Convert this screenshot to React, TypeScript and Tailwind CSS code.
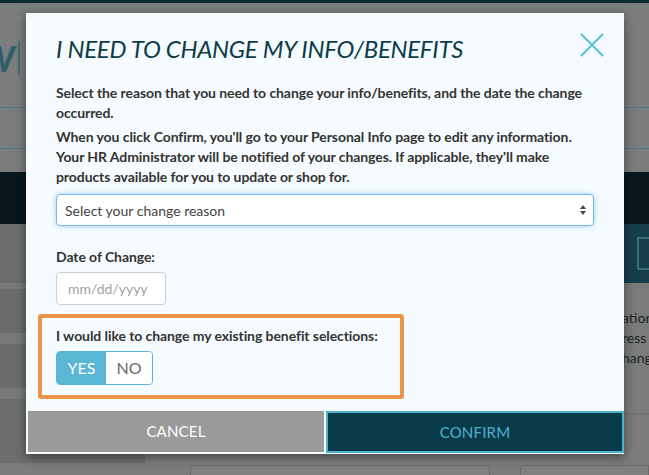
import React from "react";

function Stripe({ h, c }: { h: string; c: string }) {
  return <div className={`${h} ${c}`} />;
}

export default function App() {
  return (
    <div className="relative w-[649px] h-[475px] overflow-hidden bg-[#7a7b7b] font-['Lato','Noto_Sans',sans-serif]">
      {/* page behind (dimmed) */}
      <div className="flex flex-col w-full">
        <div className="h-[3px] bg-[#0d2a33]" />
        <div className="h-[104px] bg-[#7b7c7c] flex items-start pt-[38px]">
          <span className="text-[36px] leading-[34px] italic font-bold text-[#2f5f6c] -ml-[20px]">W</span>
          <div className="ml-[3px] mt-[0px] w-[2px] h-[34px] bg-[#3f6f7b]" />
        </div>
        <div className="h-[1px] bg-[#4a7a86]" />
        <div className="h-[40px] bg-[#7b7c7c]" />
        <div className="h-[1px] bg-[#4a7a86]" />
        <div className="h-[23px] bg-[#7b7c7c]" />
        <div className="h-[52px] bg-[#08171c]" />
        <div className="flex h-[59px]">
          <div className="flex-1 bg-[#6c6d6d]" />
          <div className="w-[100px] bg-[#163e49] flex items-center justify-end">
            <div className="w-[12px] h-[33px] border-2 border-r-0 border-[#3f6d78] rounded-l-[2px]" />
          </div>
        </div>
        <div className="flex h-[180px]">
          <div className="w-[145px] flex flex-col">
            <Stripe h="h-[6px]" c="bg-[#777878]" />
            <Stripe h="h-[44px]" c="bg-[#6a6b6b]" />
            <Stripe h="h-[11px]" c="bg-[#777878]" />
            <Stripe h="h-[44px]" c="bg-[#6a6b6b]" />
            <Stripe h="h-[11px]" c="bg-[#777878]" />
            <Stripe h="h-[64px]" c="bg-[#6c6d6d]" />
          </div>
          <div className="flex-1 flex flex-col items-end pt-[25px]">
            <div className="w-[26px] overflow-hidden text-[14px] leading-[20px] text-[#1f2426] whitespace-nowrap">
              <div className="-ml-[1px]">ation</div>
              <div className="-ml-[1px]">ress a</div>
              <div className="-ml-[1px]">hang</div>
            </div>
            <div className="mt-[45px] w-full h-[1px] bg-[#6e7070]" />
          </div>
        </div>
        <div className="flex h-[40px] pl-[190px] pt-[2px] gap-[30px]">
          <div className="w-[300px] h-[40px] rounded-[4px] border border-[#6a6b6b] bg-[#7e7f7f] pl-[7px] pt-[6px] text-[14px] text-[#1e2224]">Value</div>
          <div className="flex-1 h-[40px] rounded-l-[4px] border border-[#6a6b6b] bg-[#7e7f7f] pl-[12px] pt-[6px] text-[14px] text-[#1e2224]">040715010</div>
        </div>
      </div>

      {/* modal */}
      <div className="absolute left-[26px] top-[13px] w-[598px] bg-[#f5fbfe] shadow-[0_3px_10px_rgba(0,0,0,0.45)] flex flex-col">
        <button className="absolute right-[20px] top-[20px] w-[24px] h-[24px] flex items-center justify-center">
          <svg width="24" height="24" viewBox="0 0 24 24">
            <path d="M1.5 1.5 L22.5 22.5 M22.5 1.5 L1.5 22.5" stroke="#5ebdd7" strokeWidth="2" strokeLinecap="round" fill="none" />
          </svg>
        </button>
        <div className="px-[30px] pt-[21px]">
          <h1 className="text-[24px] leading-[30px] italic font-normal text-[#0c3b4b] tracking-[-0.3px]">
            I NEED TO CHANGE MY INFO/BENEFITS
          </h1>
          <p className="mt-[19px] text-[14px] leading-[20px] font-bold text-[#333] tracking-[-0.08px]">
            Select the reason that you need to change your info/benefits, and the date the change occurred.
          </p>
          <p className="mt-[4px] text-[14px] leading-[20px] font-bold text-[#333] tracking-[-0.08px]">
            When you click Confirm, you'll go to your Personal Info page to edit any information. Your HR Administrator will be notified of your changes. If applicable, they'll make products available for you to update or shop for.
          </p>
          <div className="mt-[7px] h-[32px] rounded-[4px] border border-[#79b7e6] bg-white shadow-[0_0_5px_rgba(102,175,233,0.6)] flex items-center justify-between pl-[8px] pr-[6px]">
            <span className="text-[14px] text-[#444]">Select your change reason</span>
            <svg width="8" height="12" viewBox="0 0 8 12">
              <path d="M4 1 L7 5 L1 5 Z M4 11 L7 7 L1 7 Z" fill="#444" />
            </svg>
          </div>
          <div className="mt-[21px] text-[14px] leading-[20px] font-bold text-[#333] tracking-[-0.08px]">Date of Change:</div>
          <div className="mt-[5px] w-[110px] h-[33px] rounded-[4px] border border-[#cfcfcf] bg-white flex items-center pl-[11px]">
            <span className="text-[14px] text-[#a3a3a3]">mm/dd/yyyy</span>
          </div>
        </div>
        <div className="mt-[9px] ml-[12px] w-[366px] border-[4px] border-[#e8944a] rounded-[3px] pl-[14px] pt-[8px] pb-[10px]">
          <div className="text-[14px] leading-[20px] font-bold text-[#333] tracking-[-0.08px]">
            I would like to change my existing benefit selections:
          </div>
          <div className="mt-[5px] flex h-[34px] w-[97px] rounded-[4px] border border-[#5ab7d3] overflow-hidden">
            <div className="w-[49px] bg-[#5ab7d3] text-white text-[16px] flex items-center justify-center">YES</div>
            <div className="flex-1 bg-white text-[#666] text-[16px] flex items-center justify-center">NO</div>
          </div>
        </div>
        <div className="mt-[12px] flex pl-[2px] pb-[1px] gap-[2px]">
          <button className="w-[296px] h-[41px] bg-[#9b9b9b] text-white text-[15px] tracking-[0.2px]">CANCEL</button>
          <button className="flex-1 h-[42px] bg-[#093a4a] border-2 border-[#4eb2cd] text-[#4eb2cd] text-[15px] tracking-[0.2px]">CONFIRM</button>
        </div>
      </div>
    </div>
  );
}
